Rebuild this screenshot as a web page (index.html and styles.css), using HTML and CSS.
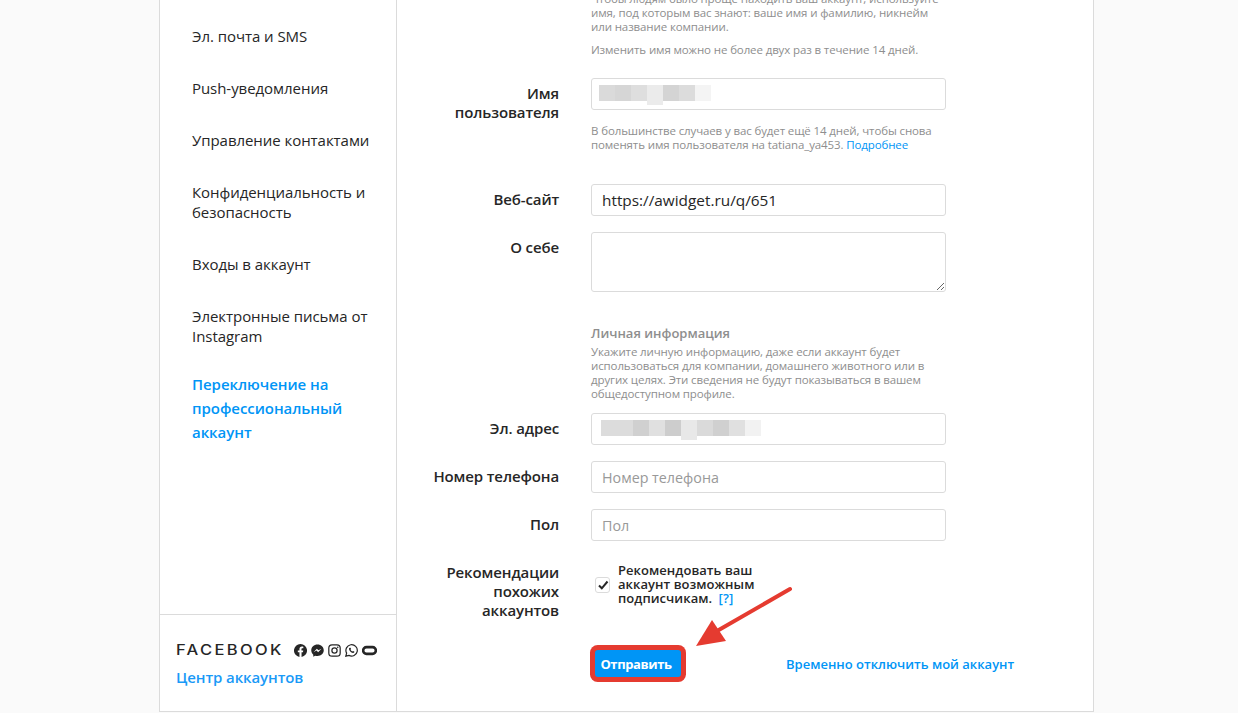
FILE: index.html
```html
<!DOCTYPE html>
<html lang="ru">
<head>
  <meta charset="UTF-8">
  <meta name="viewport" content="width=device-width, initial-scale=1.0">
  <title>Редактировать профиль</title>
  <link rel="stylesheet" href="styles.css">
</head>
<body>
  <div class="page">
    <div class="card">

      <aside class="sidebar">
        <nav class="side-nav">
          <a class="side-item">Эл. почта и SMS</a>
          <a class="side-item">Push-уведомления</a>
          <a class="side-item">Управление контактами</a>
          <a class="side-item">Конфиденциальность и безопасность</a>
          <a class="side-item">Входы в аккаунт</a>
          <a class="side-item">Электронные письма от Instagram</a>
          <a class="side-item side-item-pro">Переключение на профессиональный аккаунт</a>
        </nav>

        <div class="side-footer">
          <div class="brand-row">
            <span class="brand-name">FACEBOOK</span>
            <span class="brand-icons">
              <svg class="brand-icon" viewBox="0 0 16 16"><path d="M8 0a8 8 0 0 0-1.300 15.900v-5.600H4.700V8h2V6.200c0-2 1.200-3.100 3-3.100.9 0 1.800.2 1.800.2v2h-1c-1 0-1.300.6-1.300 1.200V8h2.200l-.4 2.300H9.300v5.600A8 8 0 0 0 8 0z"/></svg>
              <svg class="brand-icon" viewBox="0 0 16 16"><path d="M8 .5C3.600.5.300 3.700.300 7.800c0 2.200 1 4.100 2.500 5.400v2.500l2.300-1.300c.9.300 1.900.4 2.900.4 4.400 0 7.700-3.200 7.700-7C15.700 3.700 12.400.5 8 .5zm.8 9.600L6.800 8l-3.700 2.100 4.100-4.400 2 2.100 3.700-2.100-4.100 4.400z"/></svg>
              <svg class="brand-icon" viewBox="0 0 16 16"><rect x="1" y="1" width="14" height="14" rx="4" fill="none" stroke="#262626" stroke-width="1.500"/><circle cx="8" cy="8" r="3.200" fill="none" stroke="#262626" stroke-width="1.500"/><circle cx="12" cy="4" r="1"/></svg>
              <svg class="brand-icon" viewBox="0 0 16 16"><path d="M1 15l1-3.800A7 7 0 1 1 4.800 14L1 15z" fill="none" stroke="#262626" stroke-width="1.500"/><path d="M5.800 4.500c-.6.300-1 1-.9 1.800.2 2.200 2.500 4.600 4.800 4.800.8.100 1.500-.4 1.800-1l-.1-.8-1.600-.8-.8.800c-1-.4-1.800-1.200-2.200-2.200l.7-.8-.7-1.700-1-.1z"/></svg>
              <svg class="brand-icon brand-icon-wide" viewBox="0 0 20 16"><rect x="1.500" y="3.500" width="17" height="9" rx="4.500" fill="none" stroke="#262626" stroke-width="3.500"/></svg>
            </span>
          </div>
          <a class="accounts-link">Центр аккаунтов</a>
        </div>
      </aside>

      <main class="content">
        <p class="help help-top">Чтобы людям было проще находить ваш аккаунт, используйте имя, под которым вас знают: ваше имя и фамилию, никнейм или название компании.</p>
        <p class="help help-limit">Изменить имя можно не более двух раз в течение 14 дней.</p>

        <div class="row row-name">
          <label class="row-label">Имя пользователя</label>
          <div class="row-body">
            <div class="field">
              <div class="mosaic">
                <i style="background:#dadada"></i><i style="background:#d6d6d6"></i><i style="background:#dedede"></i><i class="tail" style="background:#ebebeb"></i><i style="background:#d4d4d4"></i><i style="background:#dcdcdc"></i><i style="background:#f4f4f4"></i>
              </div>
            </div>
            <p class="help help-user">В большинстве случаев у вас будет ещё 14 дней, чтобы снова поменять имя пользователя на tatiana_ya453. <a class="blue">Подробнее</a></p>
          </div>
        </div>

        <div class="row">
          <label class="row-label">Веб-сайт</label>
          <div class="row-body"><input class="field" type="text" value="https://awidget.ru/q/651"></div>
        </div>

        <div class="row">
          <label class="row-label">О себе</label>
          <div class="row-body"><textarea class="field field-bio"></textarea></div>
        </div>

        <div class="row row-info">
          <div class="row-label"></div>
          <div class="row-body">
            <h2 class="info-title">Личная информация</h2>
            <p class="help">Укажите личную информацию, даже если аккаунт будет использоваться для компании, домашнего животного или в других целях. Эти сведения не будут показываться в вашем общедоступном профиле.</p>
          </div>
        </div>

        <div class="row">
          <label class="row-label">Эл. адрес</label>
          <div class="row-body">
            <div class="field">
              <div class="mosaic mosaic-email">
                <i style="background:#dcdcdc"></i><i style="background:#dcdcdc"></i><i style="background:#d0d0d0"></i><i style="background:#e0e0e0"></i><i style="background:#cdcdcd"></i><i class="tail" style="background:#e8e8e8"></i><i style="background:#dadada"></i><i style="background:#d0d0d0"></i><i style="background:#e0e0e0"></i><i style="background:#f2f2f2"></i>
              </div>
            </div>
          </div>
        </div>

        <div class="row">
          <label class="row-label">Номер телефона</label>
          <div class="row-body"><input class="field" type="text" placeholder="Номер телефона"></div>
        </div>

        <div class="row">
          <label class="row-label">Пол</label>
          <div class="row-body"><input class="field" type="text" placeholder="Пол"></div>
        </div>

        <div class="row row-similar">
          <label class="row-label">Рекомендации похожих аккаунтов</label>
          <div class="row-body check-row">
            <span class="checkbox">
              <svg viewBox="0 0 12 12" width="12" height="12"><path d="M2 6.500l2.800 2.800L10.500 2.500" fill="none" stroke="#262626" stroke-width="2"/></svg>
            </span>
            <span class="check-text">Рекомендовать ваш аккаунт возможным подписчикам. <a class="blue help-mark">[?]</a></span>
          </div>
        </div>

        <div class="row row-submit">
          <div class="row-label"></div>
          <div class="row-body submit-row">
            <button class="submit" type="button">Отправить</button>
            <a class="disable-link">Временно отключить мой аккаунт</a>
          </div>
        </div>

        <!-- стрелка поверх формы -->
        <svg class="arrow" viewBox="0 0 100 62" width="100" height="62">
          <path d="M95 3L22 45" fill="none" stroke="#e53b30" stroke-width="4" stroke-linecap="round"/>
          <path d="M1 60L17 34 31 55z" fill="#e53b30"/>
        </svg>
      </main>

    </div>
  </div>
</body>
</html>
```

FILE: styles.css
```css
* {
  box-sizing: border-box;
}

html, body {
  margin: 0;
  height: 713px;
  overflow: hidden;
}

body {
  background-color: #fafafa;
  color: #262626;
  font-family: 'Open Sans', 'Noto Sans', sans-serif;
}

.page {
  width: 935px;
  margin-left: 159px;
}

.card {
  display: flex;
  margin-top: -20px;
  background-color: #fff;
  border: 1px solid #dbdbdb;
}

/* ---------- Sidebar ---------- */
.sidebar {
  display: flex;
  flex-direction: column;
  width: 237px;
  flex-shrink: 0;
  border-right: 1px solid #dbdbdb;
}

.side-nav {
  padding-top: 29px;
}

.side-item {
  display: block;
  padding: 16px 16px 16px 32px;
  font-size: 15px;
  line-height: 20px;
  letter-spacing: -0.05px;
}

.side-item-pro {
  padding-top: 10px;
  line-height: 24px;
  font-weight: 600;
  color: #0095f6;
}

.side-footer {
  margin-top: auto;
  height: 97px;
  padding: 26px 16px 0;
  border-top: 1px solid #dbdbdb;
}

.brand-row {
  display: flex;
  align-items: center;
  justify-content: space-between;
  height: 18px;
}

.brand-name {
  font-family: Inter, sans-serif;
  font-size: 14px;
  font-weight: 500;
  letter-spacing: 2px;
  line-height: 18px;
  transform: scaleX(1.18);
  transform-origin: left center;
}

.brand-icons {
  display: flex;
  gap: 4px;
  margin-right: 3px;
}

.brand-icon {
  width: 13px;
  height: 13px;
  fill: #262626;
}

.brand-icon-wide {
  width: 15px;
}

.accounts-link {
  display: block;
  margin-top: 8px;
  font-size: 15px;
  line-height: 20px;
  font-weight: 600;
  color: #1a9af7;
  letter-spacing: -0.1px;
}

/* ---------- Form ---------- */
.content {
  position: relative;
  flex: 1;
  padding: 11px 0 34px 32px;
}

.help {
  margin: 0;
  font-size: 11.500px;
  line-height: 14px;
  color: #8e8e8e;
  letter-spacing: -0.12px;
}

.help-top,
.help-limit {
  width: 355px;
  margin-left: 162px;
}

.help-limit {
  margin-top: 9px;
  margin-bottom: 21px;
}

.row {
  display: flex;
  gap: 32px;
  margin-bottom: 16px;
}

.row-label {
  display: block;
  width: 130px;
  flex-shrink: 0;
  padding-top: 6px;
  font-size: 15px;
  line-height: 19px;
  font-weight: 600;
  text-align: right;
  letter-spacing: -0.12px;
}

.row-body {
  width: 355px;
  flex-shrink: 0;
}

.row-name {
  margin-bottom: 32px;
}

.field {
  display: block;
  width: 100%;
  height: 32px;
  padding: 0 10px;
  background-color: #fff;
  border: 1px solid #dbdbdb;
  border-radius: 3px;
  color: #262626;
  font-family: inherit;
  font-size: 15.350px;
  outline: none;
}

.field::placeholder {
  color: #999;
  font-size: 14.300px;
}

.field-bio {
  height: 60px;
  padding-top: 6px;
}

.mosaic {
  display: flex;
  margin: 6px 0 0 -3px;
}

.mosaic i {
  position: relative;
  display: block;
  width: 16px;
  height: 16px;
}

/* хвостик буквы, торчит вниз из блюра */
.mosaic .tail::after {
  content: '';
  position: absolute;
  top: 16px;
  left: 0;
  width: 16px;
  height: 4px;
  background-color: inherit;
}

.mosaic-email {
  margin-left: -1px;
}

.help-user {
  margin-top: 14px;
}

.blue {
  color: #0095f6;
}

.row-info {
  margin-top: 32px;
  margin-bottom: 12px;
}

.info-title {
  margin: 0 0 3px;
  font-size: 13px;
  line-height: 18px;
  font-weight: 600;
  color: #8e8e8e;
}

.row-similar {
  margin-top: 20px;
  margin-bottom: 0;
}

.row-similar .row-label {
  padding-top: 2px;
}

.check-row {
  display: flex;
  align-items: flex-start;
  gap: 8px;
  padding-left: 4px;
}

.checkbox {
  display: flex;
  align-items: center;
  justify-content: center;
  width: 15px;
  height: 16px;
  margin-top: 16px;
  border: 1px solid #dbdbdb;
  border-radius: 3px;
  flex-shrink: 0;
}

.check-text {
  width: 150px;
  padding-top: 2px;
  font-size: 13px;
  line-height: 14px;
  font-weight: 600;
  letter-spacing: 0.05px;
}

.help-mark {
  margin-left: 3px;
}

.row-submit {
  margin: 0;
  padding-top: 30px;
}

.submit-row {
  display: flex;
  align-items: center;
  gap: 105px;
  width: auto;
  padding-left: 4px;
}

.submit {
  width: 86px;
  height: 27px;
  padding: 0 4px 0 0;
  background-color: #0095f6;
  border: none;
  border-radius: 3px;
  box-shadow: 0 0 0 5px #e53b30;
  color: #fff;
  font-family: inherit;
  font-size: 13px;
  font-weight: 700;
  letter-spacing: -0.4px;
}

.disable-link {
  font-size: 13px;
  font-weight: 600;
  color: #0095f6;
  white-space: nowrap;
}

.arrow {
  position: absolute;
  left: 298px;
  bottom: 63px;
}
```
